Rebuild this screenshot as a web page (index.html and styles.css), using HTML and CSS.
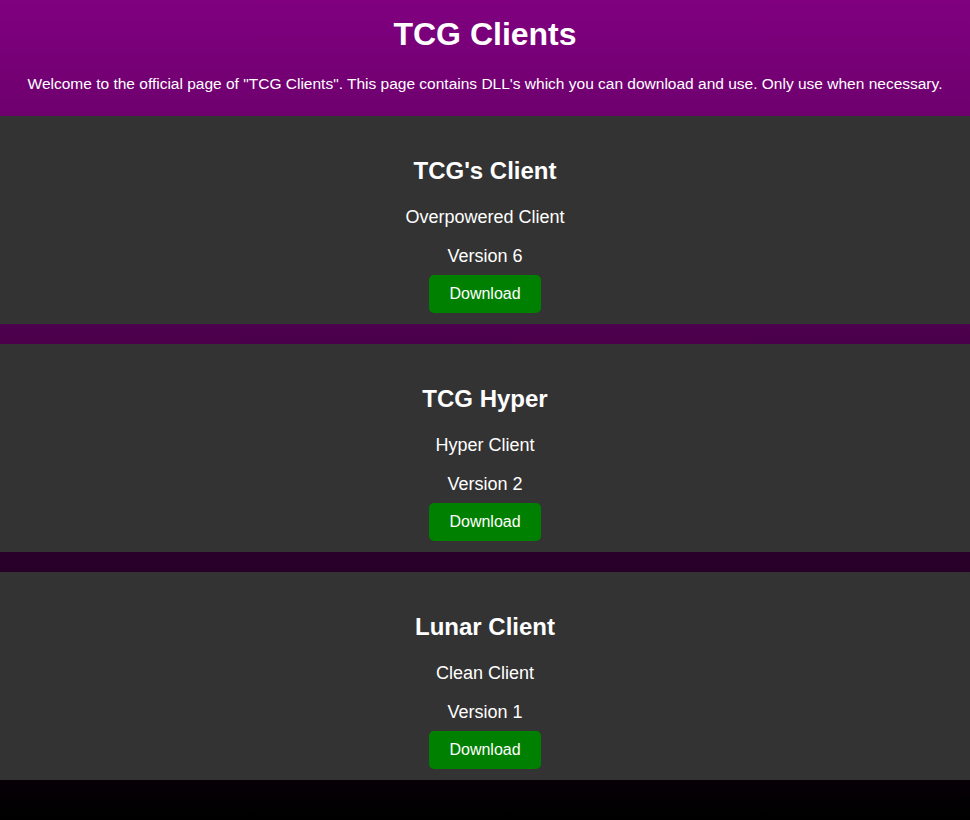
FILE: index.html
```html
<!DOCTYPE html>
<html lang="en">
<head>
<meta charset="UTF-8">
<meta name="viewport" content="width=device-width, initial-scale=1.0">
<title>TCG Clients</title>
<link rel="stylesheet" href="styles.css">
</head>
<body>
<header class="top">
  <h1>TCG Clients</h1>
  <p>Welcome to the official page of "TCG Clients". This page contains DLL's which you can download and use. Only use when necessary.</p>
</header>

<section class="client">
  <h2>TCG's Client</h2>
  <p class="desc">Overpowered Client</p>
  <p class="version">Version 6</p>
  <button class="download">Download</button>
</section>

<section class="client">
  <h2>TCG Hyper</h2>
  <p class="desc">Hyper Client</p>
  <p class="version">Version 2</p>
  <button class="download">Download</button>
</section>

<section class="client">
  <h2>Lunar Client</h2>
  <p class="desc">Clean Client</p>
  <p class="version">Version 1</p>
  <button class="download">Download</button>
</section>
</body>
</html>
```

FILE: styles.css
```css
html {
  min-height: 100%;
}
body {
  margin: 0;
  min-height: 100vh;
  font-family: 'Liberation Sans', Arial, sans-serif;
  color: #fff;
  text-align: center;
  background: linear-gradient(to bottom, #800080, #000);
}
.top {
  padding: 16px 20px 23px;
}
.top h1 {
  margin: 0 0 22px;
  font-size: 32px;
}
.top p {
  margin: 0;
  font-size: 15.5px;
  line-height: 18px;
}
.client {
  background-color: #333;
  padding: 18px 0 11px;
  margin-bottom: 20px;
}
.client:last-child {
  margin-bottom: 0;
}
.client h2 {
  margin: 23px 0 22px;
  font-size: 24px;
}
.desc {
  margin: 0 0 18px;
  font-size: 18px;
}
.version {
  margin: 0 0 8px;
  font-size: 18px;
}
.download {
  background-color: #008000;
  color: #fff;
  border: none;
  border-radius: 5px;
  padding: 10px 20px;
  font-family: 'Liberation Sans', Arial, sans-serif;
  font-size: 16px;
  line-height: 18px;
  cursor: pointer;
}
```
